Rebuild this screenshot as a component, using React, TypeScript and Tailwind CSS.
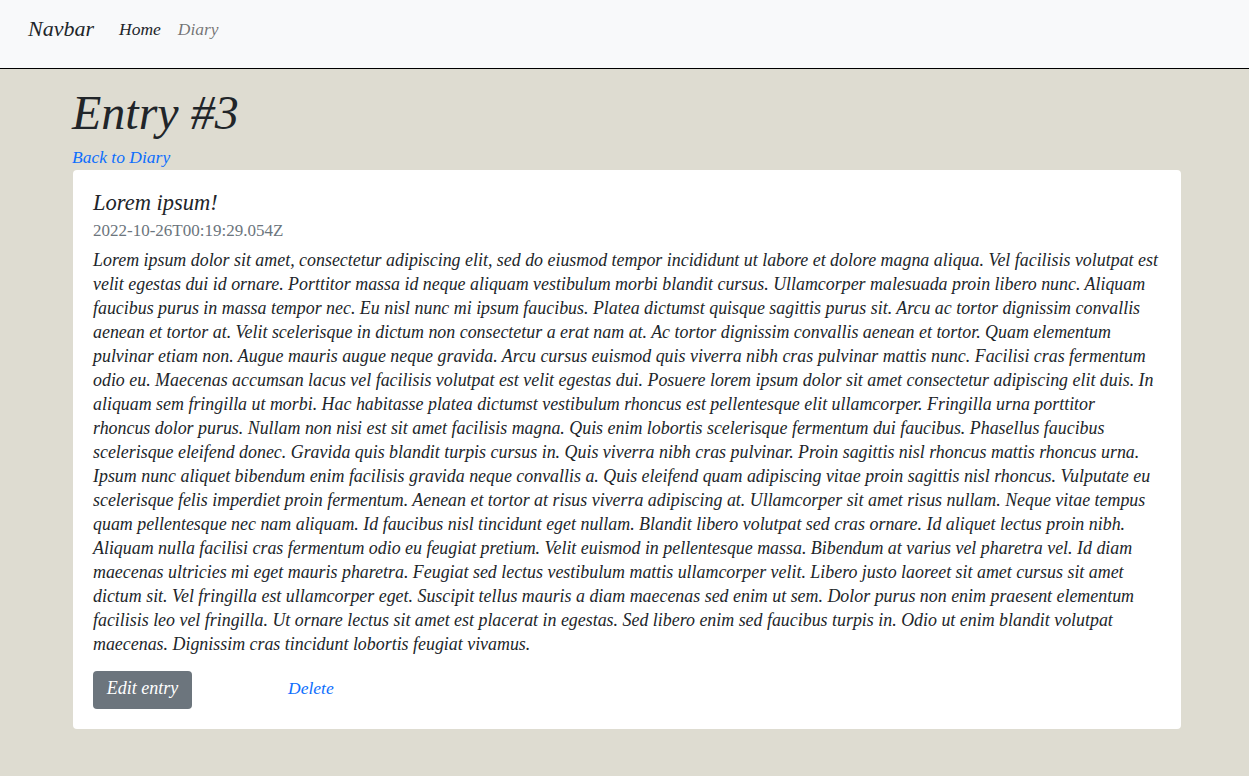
export default function App() {
  const lines = [
    "Lorem ipsum dolor sit amet, consectetur adipiscing elit, sed do eiusmod tempor incididunt ut labore et dolore magna aliqua. Vel facilisis volutpat est",
    "velit egestas dui id ornare. Porttitor massa id neque aliquam vestibulum morbi blandit cursus. Ullamcorper malesuada proin libero nunc. Aliquam",
    "faucibus purus in massa tempor nec. Eu nisl nunc mi ipsum faucibus. Platea dictumst quisque sagittis purus sit. Arcu ac tortor dignissim convallis",
    "aenean et tortor at. Velit scelerisque in dictum non consectetur a erat nam at. Ac tortor dignissim convallis aenean et tortor. Quam elementum",
    "pulvinar etiam non. Augue mauris augue neque gravida. Arcu cursus euismod quis viverra nibh cras pulvinar mattis nunc. Facilisi cras fermentum",
    "odio eu. Maecenas accumsan lacus vel facilisis volutpat est velit egestas dui. Posuere lorem ipsum dolor sit amet consectetur adipiscing elit duis. In",
    "aliquam sem fringilla ut morbi. Hac habitasse platea dictumst vestibulum rhoncus est pellentesque elit ullamcorper. Fringilla urna porttitor",
    "rhoncus dolor purus. Nullam non nisi est sit amet facilisis magna. Quis enim lobortis scelerisque fermentum dui faucibus. Phasellus faucibus",
    "scelerisque eleifend donec. Gravida quis blandit turpis cursus in. Quis viverra nibh cras pulvinar. Proin sagittis nisl rhoncus mattis rhoncus urna.",
    "Ipsum nunc aliquet bibendum enim facilisis gravida neque convallis a. Quis eleifend quam adipiscing vitae proin sagittis nisl rhoncus. Vulputate eu",
    "scelerisque felis imperdiet proin fermentum. Aenean et tortor at risus viverra adipiscing at. Ullamcorper sit amet risus nullam. Neque vitae tempus",
    "quam pellentesque nec nam aliquam. Id faucibus nisl tincidunt eget nullam. Blandit libero volutpat sed cras ornare. Id aliquet lectus proin nibh.",
    "Aliquam nulla facilisi cras fermentum odio eu feugiat pretium. Velit euismod in pellentesque massa. Bibendum at varius vel pharetra vel. Id diam",
    "maecenas ultricies mi eget mauris pharetra. Feugiat sed lectus vestibulum mattis ullamcorper velit. Libero justo laoreet sit amet cursus sit amet",
    "dictum sit. Vel fringilla est ullamcorper eget. Suscipit tellus mauris a diam maecenas sed enim ut sem. Dolor purus non enim praesent elementum",
    "facilisis leo vel fringilla. Ut ornare lectus sit amet est placerat in egestas. Sed libero enim sed faucibus turpis in. Odio ut enim blandit volutpat",
    "maecenas. Dignissim cras tincidunt lobortis feugiat vivamus.",
  ];

  return (
    <div className="min-h-screen bg-[#dedcd1] font-['Liberation_Serif',serif] text-[#212529] italic">
      {/* Navbar */}
      <nav className="h-[69px] bg-[#f8f9fa] border-b border-black flex items-start pt-[14px] px-7">
        <span className="text-[22px] leading-[30px] mr-[25px]">Navbar</span>
        <a className="text-[17.5px] leading-[30px] mr-[17px]">Home</a>
        <a className="text-[17.5px] leading-[30px] text-black/55">Diary</a>
      </nav>

      <div className="w-[1109px] ml-[72px]">
        <h1 className="text-[48px] leading-[52px] mt-[18px]">Entry #3</h1>
        <a className="block text-[17.5px] leading-6 text-[#0d6efd] mt-[6px] mb-px">Back to Diary</a>

        {/* Entry card */}
        <div className="bg-white rounded ml-px px-5 pt-5 pb-5">
          <h5 className="text-[22.5px] leading-[26px]">Lorem ipsum!</h5>
          <p className="not-italic text-[17px] leading-6 text-[#6c757d] mt-[3px] mb-[5px]">2022-10-26T00:19:29.054Z</p>
          <p className="text-[17.9px] leading-6">
            {lines.map((l, i) => (
              <span key={i} className="block whitespace-nowrap">{l}</span>
            ))}
          </p>
          <div className="flex items-center mt-[15px]">
            <button className="h-[38px] w-[99px] pb-[3px] rounded bg-[#6c757d] text-white text-[18px] italic">Edit entry</button>
            <a className="ml-24 mb-[5px] text-[17.5px] leading-6 text-[#0d6efd]">Delete</a>
          </div>
        </div>
      </div>
    </div>
  );
}
